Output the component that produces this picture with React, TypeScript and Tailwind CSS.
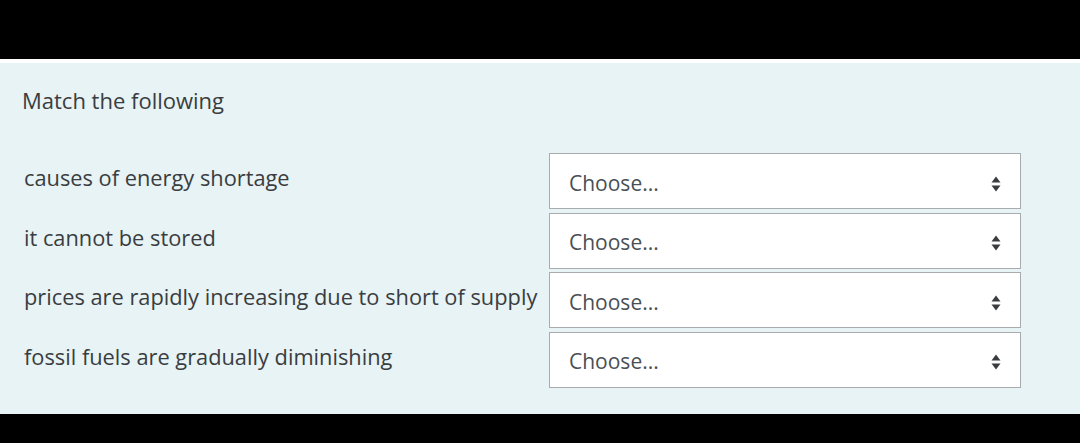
const rows = [
  'causes of energy shortage',
  'it cannot be stored',
  'prices are rapidly increasing due to short of supply',
  'fossil fuels are gradually diminishing',
];

const Arrows = () => (
  <svg width="10" height="16" viewBox="0 0 10 16" className="text-[#3a3d40]">
    <path d="M5 0.5 L9.5 6.5 L0.5 6.5 Z" fill="currentColor" />
    <path d="M5 15.5 L9.5 9.5 L0.5 9.5 Z" fill="currentColor" />
  </svg>
);

export default function App() {
  return (
    <div className="w-[1080px] h-[443px] bg-black flex flex-col overflow-hidden" style={{ fontFamily: '"Open Sans", "Noto Sans", sans-serif' }}>
      <div className="h-[59px] shrink-0" />
      <div className="h-[4px] bg-white shrink-0" />
      <div className="h-[351px] bg-[#e7f3f5] pl-[22px] pt-[22px] text-[#3a3d40]">
        <h1 className="text-[22px] leading-[30px]">Match the following</h1>
        <div className="mt-[38px] flex flex-col gap-[3.5px]">
          {rows.map((r) => (
            <div key={r} className="flex items-start">
              <div className="w-[527px] pl-[2px] pt-[10px] text-[21.8px] leading-[30px] whitespace-nowrap">{r}</div>
              <div className="w-[472px] h-[56px] bg-white border-[1.5px] border-[#a8acae] flex items-center justify-between pl-[19px] pr-[19px] pt-[5px]">
                <span className="text-[21px] text-[#4a4f54]">Choose...</span>
                <Arrows />
              </div>
            </div>
          ))}
        </div>
      </div>
    </div>
  );
}
